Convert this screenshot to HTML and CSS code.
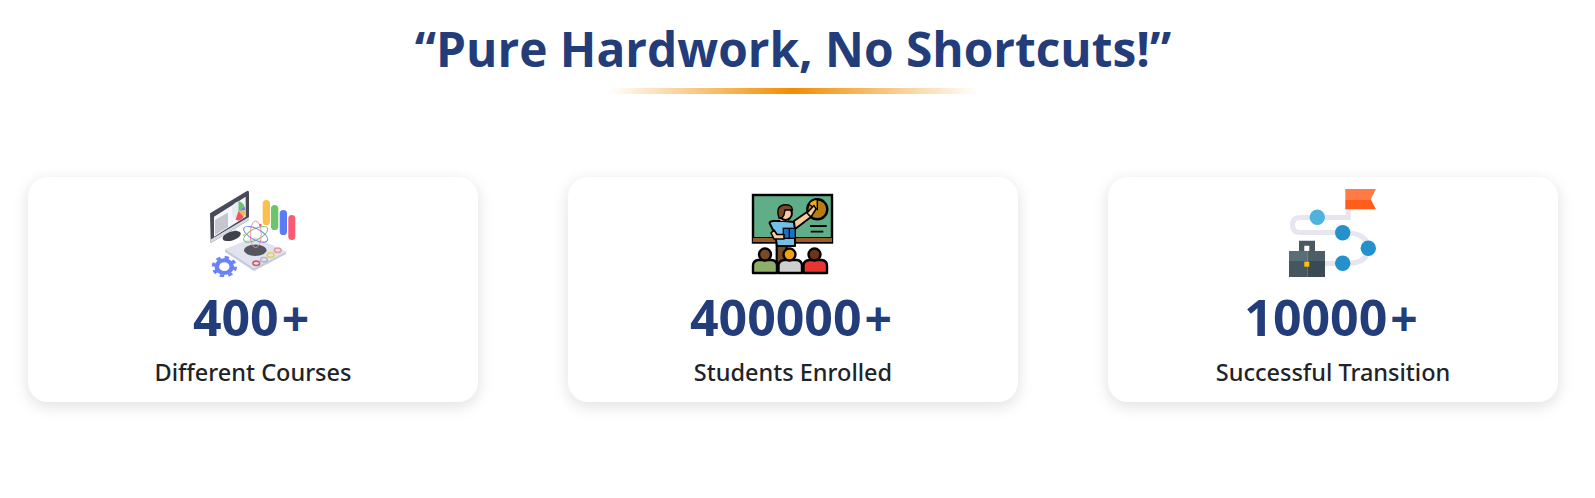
FILE: index.html
```html
<!DOCTYPE html>
<html lang="en">
<head>
<meta charset="utf-8">
<title>Pure Hardwork, No Shortcuts</title>
<link rel="stylesheet" href="styles.css">
</head>
<body>
<section class="stats">
  <header class="head">
    <h2 class="title">“Pure Hardwork, No Shortcuts!”</h2>
    <div class="rule"></div>
  </header>
  <div class="cards">
    <article class="card">
      <svg class="icon" viewBox="0 0 110 90" aria-hidden="true">
        <path d="M27 62 L57 50 L88 64.5 L56 81 Z" fill="#e0e3ee"/>
        <path d="M27 62 L56 81 L88 64.5 V67 L56 84 L27 65 Z" fill="#c7cbdb"/>
        <ellipse cx="57.3" cy="63.3" rx="11.3" ry="5.7" fill="#55555f"/>
        <path d="M28 48 L38 42 L40 46 L31 51 Z" fill="#c9ccd8"/>
        <ellipse cx="33.7" cy="49" rx="9.5" ry="4.4" fill="#3f404c" transform="rotate(-18 33.7 49)"/>
        <path d="M12 26.3 L49 4 Q51 3 51 6 V33 L12.7 56 Z" fill="#484a59"/>
        <path d="M12.7 52.5 L51 30 V33 L12.7 56 Z" fill="#d6d9e4"/>
        <path d="M16 29.7 L47.7 9.7 V29.7 L16 49.7 Z" fill="#f5f6fa"/>
        <path d="M17 33 L30 25.5 V40 L17 48 Z" fill="#c4c7d0"/>
        <g transform="translate(40.5 24) scale(6.8 9.5)">
          <circle r="1" fill="#e9ebf3"/>
          <path d="M0 0 V-1 A1 1 0 0 1 .87 -.5 Z" fill="#6fc06a"/>
          <path d="M0 0 L.87 -.5 A1 1 0 0 1 1 -.09 Z" fill="#6a82e8"/>
          <path d="M0 0 L1 -.09 A1 1 0 0 1 .77 .64 Z" fill="#f7b84b"/>
          <path d="M0 0 L.77 .64 A1 1 0 0 1 -.42 .9 Z" fill="#f2545f"/>
        </g>
        <rect x="64.7" y="13" width="7.3" height="25" rx="3.6" fill="#fcbf49"/>
        <rect x="73" y="18" width="7.3" height="25" rx="3.6" fill="#6cc56b"/>
        <rect x="81.7" y="23" width="7.3" height="25" rx="3.6" fill="#5c7cf5"/>
        <rect x="90.3" y="28" width="7" height="25" rx="3.5" fill="#fb5a70"/>
        <g fill="none" stroke-width=".9">
          <ellipse cx="57.7" cy="47.3" rx="5.5" ry="13.3" stroke="#f28a96"/>
          <ellipse cx="57.7" cy="47.3" rx="5.5" ry="13.3" stroke="#6fc06a" transform="rotate(62 57.7 47.3)"/>
          <ellipse cx="57.7" cy="47.3" rx="5.5" ry="13.3" stroke="#6a82e8" transform="rotate(-62 57.7 47.3)"/>
        </g>
        <circle cx="62.5" cy="38" r="1.2" fill="#f2545f"/>
        <circle cx="46" cy="48" r="1" fill="#f7b84b"/>
        <g fill="none" stroke-width="1.6">
          <ellipse cx="58.3" cy="76.3" rx="3.4" ry="2.2" stroke="#d0566a"/>
          <ellipse cx="66" cy="72.7" rx="3.4" ry="2.2" stroke="#b6b8c4"/>
          <ellipse cx="72.7" cy="68" rx="3.4" ry="2.2" stroke="#e3cf5a"/>
          <ellipse cx="79.7" cy="63.3" rx="3.4" ry="2.2" stroke="#e69aa4"/>
        </g>
        <g transform="translate(26.3 79.7) scale(1 .85)">
          <circle r="7.5" fill="none" stroke="#6a82f5" stroke-width="4.6"/>
          <circle r="11" fill="none" stroke="#6a82f5" stroke-width="3.2" stroke-dasharray="4.4 4.24"/>
        </g>
      </svg>
      <div class="num">400<span class="plus">+</span></div>
      <p class="label">Different Courses</p>
    </article>
    <article class="card">
      <svg class="icon" viewBox="0 0 110 90" aria-hidden="true">
        <rect x="15" y="8" width="79" height="47.5" fill="#5fae88" stroke="#000" stroke-width="2.4"/>
        <rect x="15" y="51" width="79" height="4" fill="#9a5b2a"/>
        <path d="M15 50.5 H94" stroke="#000" stroke-width="1.2"/>
        <circle cx="79.3" cy="22.3" r="10" fill="#b67d10" stroke="#000" stroke-width="2.4"/>
        <path d="M79.3 22.3 V12.3 A10 10 0 0 0 70.6 17.3 Z" fill="#f0a81f" stroke="#000" stroke-width="1.4"/>
        <path d="M72 39 H88.7 M72.7 44.7 H85.3" stroke="#000" stroke-width="1.8"/>
        <path d="M38.7 58 H48.7 V76 H38.7 Z" fill="#7a4a22" stroke="#000" stroke-width="2.2"/>
        <path d="M31.5 36 Q32 34 36 34 H46 L56 35 L57 41 V59 H39 L37 47 Z" fill="#72bfe8" stroke="#000" stroke-width="2" stroke-linejoin="round"/>
        <path d="M56 34 L69 25 L73 30 L57 42 Z" fill="#f9c9a0" stroke="#000" stroke-width="1.8" stroke-linejoin="round"/>
        <path d="M69 26 L76 18.5 L78 22 L73 30 Z" fill="#f9c9a0" stroke="#000" stroke-width="1.5" stroke-linejoin="round"/>
        <rect x="45.3" y="41.3" width="12" height="10" fill="#1a72c8" stroke="#000" stroke-width="1.3"/>
        <path d="M51.3 41.3 V51.3" stroke="#000" stroke-width="1.3"/>
        <path d="M33 46 L36 52 H46 V47.5 H39 L36 43 Z" fill="#f9c9a0" stroke="#000" stroke-width="1.6" stroke-linejoin="round"/>
        <path d="M42 28 L42.5 34 H50 L50 28 Z" fill="#f9c9a0"/>
        <circle cx="47.5" cy="26.5" r="6.4" fill="#f9c9a0" stroke="#000" stroke-width="2"/>
        <path d="M41 31 Q37.5 20 45 18 Q54 16.5 54.5 23 L47 23 L46 28 L44 31 Z" fill="#7a4a22" stroke="#000" stroke-width="1.4"/>
        <g stroke="#000" stroke-width="2.4" stroke-linejoin="round">
          <path d="M15 86 V78.5 Q15 74 20 73 H34 Q39 74 39 78.5 V86 Z" fill="#8fae6a"/>
          <path d="M40.5 86 V78.5 Q40.5 74 46 73 H59 Q64 74 64 78.5 V86 Z" fill="#cfcfcf"/>
          <path d="M65.5 86 V78.5 Q65.5 74 71 73 H84 Q89 74 89 78.5 V86 Z" fill="#e8352f"/>
          <circle cx="27" cy="67.5" r="6" fill="#7a4a22"/>
          <circle cx="51.5" cy="67.5" r="6" fill="#f0a010"/>
          <circle cx="76.5" cy="67.5" r="6" fill="#6a3616"/>
        </g>
      </svg>
      <div class="num">400000<span class="plus">+</span></div>
      <p class="label">Students Enrolled</p>
    </article>
    <article class="card">
      <svg class="icon" viewBox="0 0 110 90" aria-hidden="true">
        <path d="M70.3 22 V30.5 H22 Q14.5 30.5 14.5 38 Q14.5 45.5 22 45.5 H68 Q90 47 90 61 Q90 76 70 76.5 H46" fill="none" stroke="#e6e7ee" stroke-width="5"/>
        <path d="M67.3 2 H98 L92.7 12.3 H67.3 Z" fill="#ff7a45"/>
        <path d="M67.3 12.3 H92.7 L98 22.3 H67.3 Z" fill="#ff5e1a"/>
        <circle cx="39.3" cy="30.3" r="7.7" fill="#4fb3de"/>
        <circle cx="64.7" cy="45.7" r="7.7" fill="#2490cc"/>
        <circle cx="90.3" cy="61.3" r="7.7" fill="#2490cc"/>
        <circle cx="64.7" cy="76.3" r="7.7" fill="#2490cc"/>
        <path d="M21 64 V53.7 H37 V64 H31.3 V58.7 H26.3 V64 Z" fill="#4a5a63"/>
        <rect x="11" y="64" width="18.3" height="10" fill="#5a6e78"/>
        <rect x="29.3" y="64" width="17.7" height="10" fill="#4c5e68"/>
        <rect x="11" y="74" width="18.3" height="16" fill="#455660"/>
        <rect x="29.3" y="74" width="17.7" height="16" fill="#3a4a53"/>
        <rect x="26.3" y="74.7" width="5" height="5" fill="#ffc107"/>
      </svg>
      <div class="num">10000<span class="plus">+</span></div>
      <p class="label">Successful Transition</p>
    </article>
  </div>
</section>
</body>
</html>
```

FILE: styles.css
```css
* { box-sizing: border-box; }
html, body { margin: 0; padding: 0; background: #fff; }
body {
  font-family: "Open Sans", "Noto Sans", sans-serif;
  height: 498px;
  overflow: hidden;
}
.stats { padding: 16px 37px 0 28px; }
.head { display: flex; flex-direction: column; align-items: center; }
.title {
  margin: 0;
  font-size: 47.8px;
  line-height: 66px;
  font-weight: 700;
  color: #233d7b;
  white-space: nowrap;
}
.rule {
  width: 370px;
  height: 6px;
  margin-top: 6px;
  background: linear-gradient(90deg, rgba(242,140,0,0), #f28c00 50%, rgba(242,140,0,0));
}
.cards {
  display: flex;
  gap: 90px;
  margin-top: 83px;
}
.card {
  flex: 0 0 450px;
  height: 225px;
  background: #fff;
  border-radius: 20px;
  box-shadow: 0 4px 16px rgba(0,0,0,.13);
  display: flex;
  flex-direction: column;
  align-items: center;
  padding-top: 10px;
}
.icon { width: 110px; height: 90px; display: block; filter: blur(.3px); }
.num {
  font-size: 50px;
  line-height: 60px;
  font-weight: 700;
  color: #233d7b;
  margin-top: 10px;
}
.plus { margin: 0 4px 0 3px; font-size: 48px; }
.label {
  margin: 9px 0 0;
  font-family: "Noto Sans", "Open Sans", sans-serif;
  font-size: 23.5px;
  line-height: 30px;
  font-weight: 500;
  color: #1f2327;
}
```
